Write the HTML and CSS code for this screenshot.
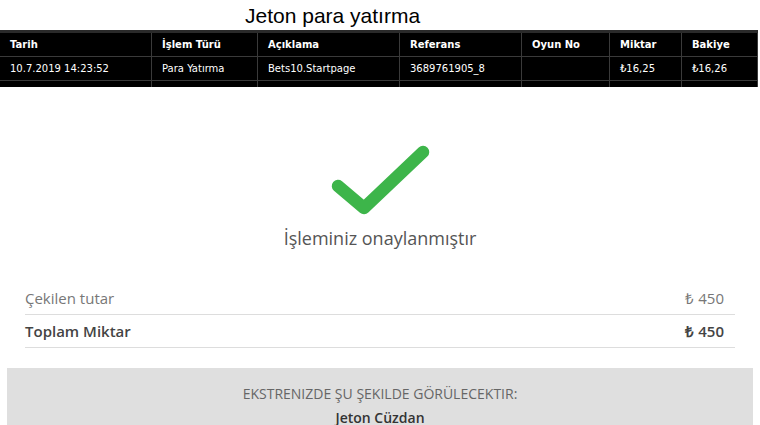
FILE: index.html
```html
<!DOCTYPE html>
<html lang="tr">
<head>
<meta charset="utf-8">
<link rel="stylesheet" href="styles.css">
</head>
<body>
<div class="title">Jeton para yatırma</div>
<div class="tablewrap">
  <table class="tx">
    <colgroup>
      <col class="c1"><col class="c2"><col class="c3"><col class="c4"><col class="c5"><col class="c6"><col class="c7">
    </colgroup>
    <tr class="head">
      <th>Tarih</th><th>İşlem Türü</th><th>Açıklama</th><th>Referans</th><th>Oyun No</th><th>Miktar</th><th>Bakiye</th>
    </tr>
    <tr>
      <td>10.7.2019 14:23:52</td><td>Para Yatırma</td><td>Bets10.Startpage</td><td>3689761905_8</td><td></td><td>₺16,25</td><td>₺16,26</td>
    </tr>
    <tr>
      <td>&nbsp;</td><td></td><td></td><td></td><td></td><td></td><td></td>
    </tr>
  </table>
</div>
<div class="confirm">
  <svg class="check" width="110" height="80" viewBox="0 0 110 80">
    <polyline points="13,43 39,65 98,9" fill="none" stroke="#3db54a" stroke-width="12.5" stroke-linecap="round" stroke-linejoin="round"/>
  </svg>
  <div class="msg">İşleminiz onaylanmıştır</div>
</div>
<div class="rows">
  <div class="row"><span>Çekilen tutar</span><span>₺ 450</span></div>
  <div class="row total"><span>Toplam Miktar</span><span>₺ 450</span></div>
</div>
<div class="statement">
  <div class="st-label">EKSTRENIZDE ŞU ŞEKILDE GÖRÜLECEKTIR:</div>
  <div class="st-name">Jeton Cüzdan</div>
</div>
</body>
</html>
```
FILE: styles.css
```css
html, body {
  margin: 0;
  padding: 0;
  background: #fff;
  overflow: hidden;
}
body {
  width: 760px;
  height: 425px;
  font-family: "Open Sans", sans-serif;
}
.title {
  height: 30px;
  padding-left: 245px;
  font: 21px/32px "Liberation Sans", Arial, sans-serif;
  color: #000;
}
.tablewrap {
  height: 57px;
  width: 758px;
  overflow: hidden;
  background: #000;
  border-top: 3px solid #2a2a2a;
  box-sizing: border-box;
}
.tx {
  border-collapse: collapse;
  table-layout: fixed;
  width: 758px;
  margin-left: -1px;
  font-family: "DejaVu Sans", Verdana, sans-serif;
  font-size: 10px;
  color: #fff;
}
.tx th, .tx td {
  border: 1px solid #3a3a3a;
  border-top: none;
  height: 23px;
  padding: 0 9px 0 10px;
  text-align: left;
  white-space: nowrap;
  overflow: hidden;
}
.tx th { font-weight: bold; }
.tx td { font-weight: normal; }
.c1 { width: 152px; }
.c2 { width: 106px; }
.c3 { width: 142px; }
.c4 { width: 122px; }
.c5 { width: 88px; }
.c6 { width: 72px; }
.c7 { width: 76px; }
.confirm {
  display: flex;
  flex-direction: column;
  align-items: center;
  padding-top: 56px;
}
.check {
  display: block;
  margin-left: 0;
}
.msg {
  margin-top: 3px;
  font-size: 18px;
  line-height: 24px;
  color: #555;
}
.rows {
  margin: 32px 25px 0 25px;
}
.row {
  display: flex;
  justify-content: space-between;
  height: 32px;
  line-height: 32px;
  padding-right: 11px;
  border-bottom: 1px solid #ddd;
  font-size: 15px;
  color: #777;
}
.row.total {
  font-weight: 600;
  color: #444;
}
.statement {
  margin: 20px 7px 0 7px;
  background: #dfdfdf;
  height: 80px;
  text-align: center;
  padding-top: 15px;
  box-sizing: border-box;
}
.st-label {
  font-size: 14px;
  line-height: 22px;
  color: #666;
}
.st-name {
  font-size: 14px;
  line-height: 26px;
  font-weight: 600;
  color: #333;
}
```
